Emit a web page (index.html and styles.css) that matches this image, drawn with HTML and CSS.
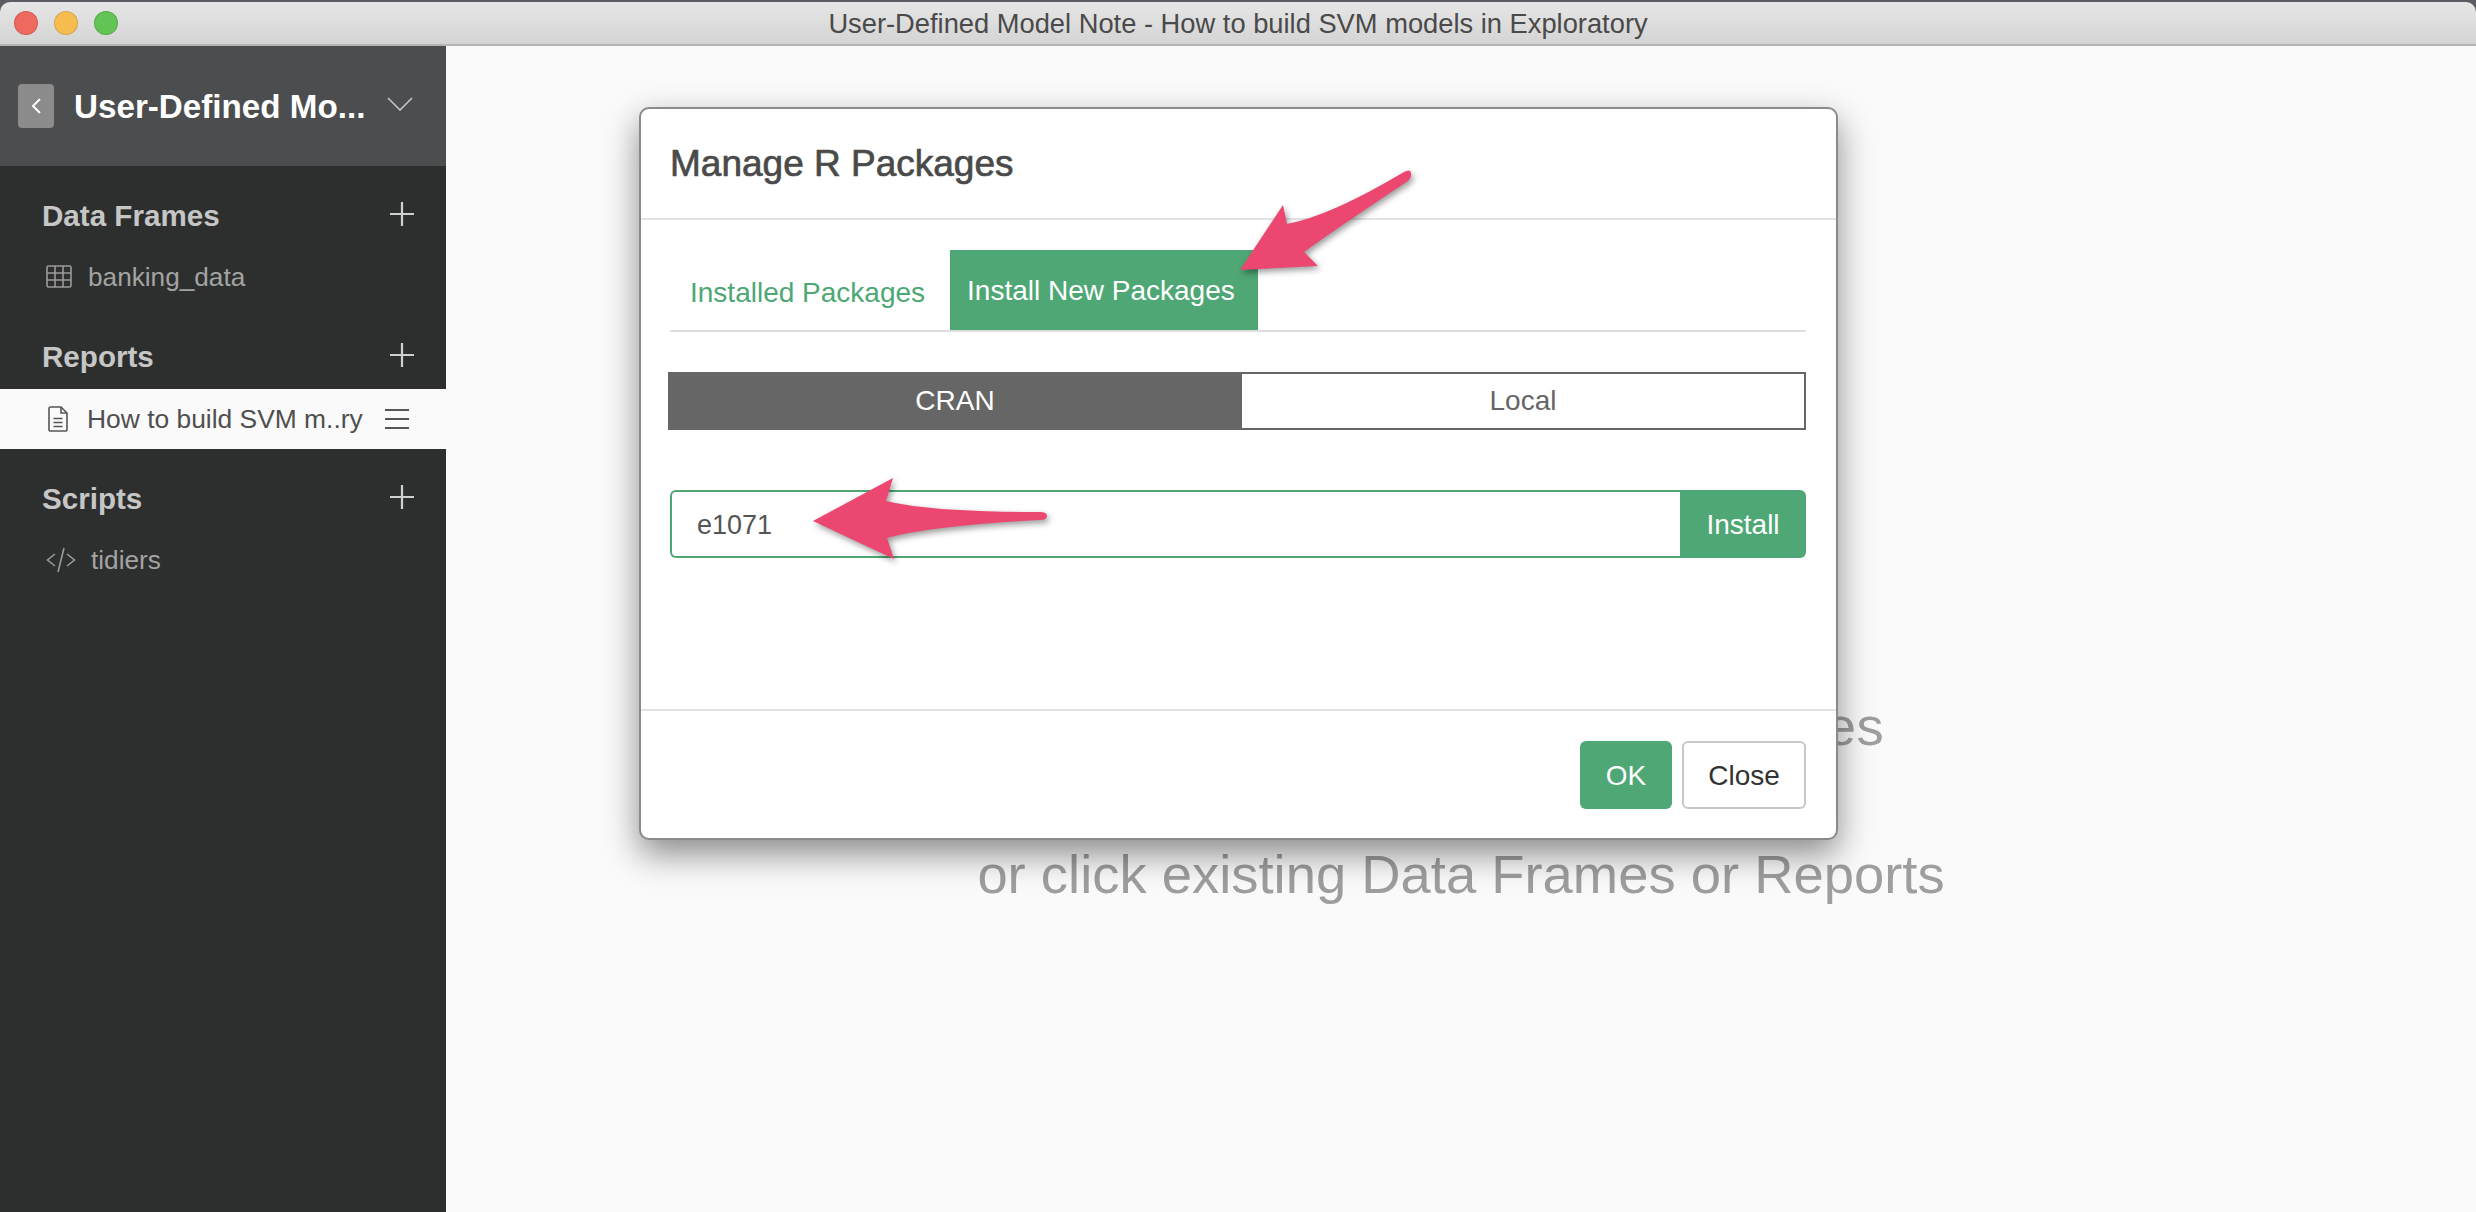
FILE: index.html
```html
<!DOCTYPE html>
<html lang="en">
<head>
<meta charset="utf-8">
<title>User-Defined Model Note - How to build SVM models in Exploratory</title>
<link rel="stylesheet" href="styles.css">
</head>
<body>
<div class="window">
  <header class="titlebar">
    <div class="lights"><span class="light red"></span><span class="light yellow"></span><span class="light green"></span></div>
    <div class="wintitle">User-Defined Model Note - How to build SVM models in Exploratory</div>
  </header>
  <div class="app">
    <aside class="sidebar">
      <div class="project">
        <button class="back"><svg width="12" height="18" viewBox="0 0 12 18"><path d="M10 2 3 9l7 7" fill="none" stroke="#fff" stroke-width="2"/></svg></button>
        <div class="project-name">User-Defined Mo...</div>
        <svg class="chev" width="26" height="14" viewBox="0 0 26 14"><path d="M1 1l12 12L25 1" fill="none" stroke="#c4c4c4" stroke-width="1.6"/></svg>
      </div>
      <nav class="tree">
        <section class="group">
          <div class="group-head"><span>Data Frames</span><svg class="plus" width="24" height="24" viewBox="0 0 24 24"><path d="M12 0v24M0 12h24" stroke="#cfcfcf" stroke-width="2.2"/></svg></div>
          <div class="item">
            <svg class="ico-table" width="26" height="24" viewBox="0 0 26 24"><g fill="none" stroke="#9a9a9a" stroke-width="1.6"><rect x="1" y="1" width="24" height="21" rx="1.5"/><path d="M1 8h24M1 15h24M9 1v21M17 1v21"/></g></svg>
            <span class="item-label">banking_data</span>
          </div>
        </section>
        <section class="group">
          <div class="group-head"><span>Reports</span><svg class="plus" width="24" height="24" viewBox="0 0 24 24"><path d="M12 0v24M0 12h24" stroke="#cfcfcf" stroke-width="2.2"/></svg></div>
          <div class="item active">
            <svg class="ico-doc" width="20" height="26" viewBox="0 0 20 26"><g fill="none" stroke="#555" stroke-width="1.6"><path d="M2.5 1H13l6 6v16.5a1.5 1.5 0 0 1-1.5 1.5h-15A1.5 1.5 0 0 1 1 23.500V2.500A1.500 1.500 0 0 1 2.500 1z"/><path d="M13 1v6h6M5.500 12.500h9M5.500 16.500h9M5.500 20.500h9"/></g></svg>
            <span class="item-label">How to build SVM m..ry</span>
            <svg class="burger" width="24" height="20" viewBox="0 0 24 20"><path d="M0 1h24M0 10h24M0 19h24" stroke="#555" stroke-width="1.800"/></svg>
          </div>
        </section>
        <section class="group">
          <div class="group-head"><span>Scripts</span><svg class="plus" width="24" height="24" viewBox="0 0 24 24"><path d="M12 0v24M0 12h24" stroke="#cfcfcf" stroke-width="2.2"/></svg></div>
          <div class="item">
            <svg class="ico-code" width="30" height="26" viewBox="0 0 30 26"><path d="M9 7 1.500 13 9 19M21 7l7.500 6-7.500 6M18 1l-6 24" fill="none" stroke="#9a9a9a" stroke-width="1.600"/></svg>
            <span class="item-label">tidiers</span>
          </div>
        </section>
      </nav>
    </aside>
    <main class="main">
      <div class="hint hint-first">Click + button to add Data Frames</div>
      <div class="hint">or</div>
      <div class="hint">or click existing Data Frames or Reports</div>
    </main>
  </div>
</div>

<div class="modal">
  <div class="modal-head">Manage R Packages</div>
  <div class="modal-body">
    <div class="tabs">
      <div class="tab">Installed Packages</div>
      <div class="tab on">Install New Packages</div>
    </div>
    <div class="toggle">
      <div class="seg on">CRAN</div>
      <div class="seg">Local</div>
    </div>
    <div class="install-row">
      <div class="pkg-input">e1071</div>
      <button class="install-btn">Install</button>
    </div>
  </div>
  <div class="modal-foot">
    <button class="btn ok">OK</button>
    <button class="btn close">Close</button>
  </div>
</div>

<svg class="arrows" width="2476" height="1212" viewBox="0 0 2476 1212">
  <path class="arrow" d="M1240 270 1283 205 1287 224Q1330 216 1404 172 1411 168 1411 174 1412 177 1408 181 1340 226 1304 252L1318 266Z"/>
  <path class="arrow" d="M813 521 893 478 886 501Q930 512 1040 512 1047 512 1047 516 1047 520 1040 520 930 526 887 538L894 559Z"/>
</svg>
</body>
</html>
```
FILE: styles.css
```css
* { box-sizing: border-box; }
html, body { margin: 0; height: 100%; }
body {
  width: 2476px;
  height: 1212px;
  overflow: hidden;
  background: #5b5b62;
  font-family: "Liberation Sans", Arial, sans-serif;
}
button { font-family: inherit; margin: 0; }

.window {
  display: flex;
  flex-direction: column;
  height: 1212px;
  padding-top: 2px;
}
.titlebar {
  flex: none;
  height: 44px;
  display: flex;
  align-items: center;
  position: relative;
  background: linear-gradient(#e6e6e6, #d4d4d4);
  border-bottom: 2px solid #b4b4b4;
  border-radius: 10px 10px 0 0;
}
.lights { display: flex; gap: 16px; padding-left: 14px; }
.light { width: 24px; height: 24px; border-radius: 50%; border: 1px solid rgba(0,0,0,.12); }
.red { background: #ee6a5f; }
.yellow { background: #f5bd4f; }
.green { background: #61c454; }
.wintitle {
  position: absolute;
  left: 0; right: 0;
  top: 7px;
  text-align: center;
  font-size: 27.300px;
  line-height: 30px;
  color: #4a4a4a;
}

.app { flex: 1; display: flex; min-height: 0; }
.sidebar { flex: none; width: 446px; background: #2d2f2e; }
.project {
  height: 120px;
  display: flex;
  align-items: center;
  background: #4c4d4f;
  padding-left: 18px;
}
.back {
  width: 36px; height: 44px;
  padding: 0;
  border: 0;
  border-radius: 4px;
  background: #8b8b8b;
  display: flex; align-items: center; justify-content: center;
}
.project-name {
  margin-left: 20px;
  width: 313px;
  font-size: 33.200px;
  font-weight: 700;
  color: #fff;
  white-space: nowrap;
  padding-top: 2px;
}
.chev { margin-bottom: 4px; }

.tree { padding-top: 17px; display: flex; flex-direction: column; gap: 17px; }
.group-head {
  height: 64px;
  display: flex;
  align-items: center;
  justify-content: space-between;
  padding: 2px 32px 0 42px;
  font-size: 29.600px;
  font-weight: 700;
  color: #c6c6c6;
}
.plus { margin-top: -4px; }
.item {
  height: 60px;
  display: flex;
  align-items: center;
  padding-left: 46px;
  font-size: 26.200px;
  color: #a3a3a3;
}
.item-label { margin-left: 16px; white-space: nowrap; }
.ico-doc { margin-left: 2px; }
.ico-code + .item-label { margin-left: 15px; }
.item.active { background: #fafafa; color: #4f4f4f; margin-top: 1px; font-size: 26.400px; }
.item.active .item-label { margin-left: 19px; }
.burger { margin-left: 22px; }

.main {
  flex: 1;
  background: #fafafa;
  padding-top: 644px;
  display: flex;
  flex-direction: column;
  align-items: center;
  color: #9e9e9e;
  font-size: 54.400px;
  line-height: 74px;
}
.hint { white-space: nowrap; }
.hint-first { letter-spacing: .6px; }

.modal {
  position: absolute;
  left: 639px;
  top: 107px;
  width: 1199px;
  height: 733px;
  background: #fff;
  border: 2px solid #8a8a8a;
  border-radius: 10px;
  box-shadow: 0 14px 34px rgba(0,0,0,.45);
  display: flex;
  flex-direction: column;
}
.modal-head {
  flex: none;
  height: 111px;
  padding: 0 29px;
  display: flex;
  align-items: center;
  border-bottom: 2px solid #e3e3e3;
  font-size: 37px;
  font-weight: 500;
  color: #4a4a4a;
  -webkit-text-stroke: .7px #4a4a4a;
}
.modal-body {
  flex: none;
  height: 491px;
  padding: 30px 30px 0 29px;
  border-bottom: 2px solid #e3e3e3;
}
.tabs {
  display: flex;
  height: 82px;
  border-bottom: 2px solid #dedede;
}
.tab {
  font-size: 28px;
  color: #4ea774;
  padding: 27px 25px 0 20px;
}
.tab.on {
  background: #4ea774;
  color: #fff;
  height: 80px;
  padding: 25px 23px 0 17px;
}
.toggle {
  display: flex;
  height: 58px;
  margin: 40px 0 0 -2px;
  border: 2px solid #666;
  font-size: 28px;
  color: #666;
}
.seg { flex: 1 1 0; display: flex; align-items: center; justify-content: center; }
.seg:first-child { flex: none; width: 572px; padding-right: 2px; }
.seg.on { background: #666; color: #fff; }
.install-row { display: flex; height: 68px; margin-top: 60px; }
.pkg-input {
  flex: 1;
  border: 2px solid #4ea774;
  border-right: 0;
  border-radius: 6px 0 0 6px;
  padding: 2px 0 0 25px;
  display: flex;
  align-items: center;
  font-size: 27px;
  color: #555;
}
.install-btn {
  flex: none;
  width: 126px;
  border: 0;
  border-radius: 0 6px 6px 0;
  background: #4ea774;
  color: #fff;
  font-size: 28px;
  padding: 2px 0 0;
}
.modal-foot {
  flex: 1;
  display: flex;
  justify-content: flex-end;
  align-items: flex-start;
  gap: 10px;
  padding: 30px 30px 0 0;
}
.btn { height: 68px; border-radius: 6px; font-size: 28px; padding: 2px 0 0; }
.ok { width: 92px; border: 0; background: #4ea774; color: #fff; }
.close { width: 124px; border: 2px solid #c8c8c8; background: #fff; color: #333; }

.arrows { position: absolute; left: 0; top: 0; pointer-events: none; }
.arrow { fill: #ec4770; filter: drop-shadow(2px 3px 3px rgba(0,0,0,.4)); }
```
